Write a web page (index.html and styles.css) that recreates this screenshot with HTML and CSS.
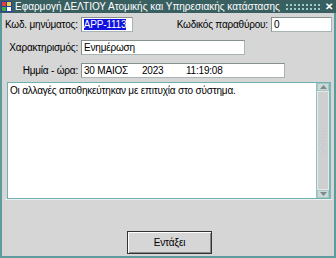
FILE: index.html
```html
<!DOCTYPE html>
<html lang="el">
<head>
<meta charset="utf-8">
<link rel="stylesheet" href="styles.css">
</head>
<body>
<div class="window">
  <div class="titlebar">
    <svg class="appicon" width="11" height="11" viewBox="0 0 11 11">
      <rect x="0" y="0" width="11" height="11" fill="#2a3fa0"/>
      <rect x="1" y="1" width="4" height="4" fill="#e04040"/>
      <rect x="6" y="1" width="4" height="4" fill="#f0d040"/>
      <rect x="1" y="6" width="4" height="4" fill="#40b040"/>
      <rect x="6" y="6" width="4" height="4" fill="#ffffff"/>
    </svg>
    <span class="title">Εφαρμογή ΔΕΛΤΙΟΥ Ατομικής και Υπηρεσιακής κατάστασης</span>
    <span class="grip"></span>
    <span class="close">✕</span>
  </div>
  <div class="content">
    <div class="row row1">
      <span class="label">Κωδ. μηνύματος:</span>
      <span class="field f-code"><span class="sel">APP-1113</span></span>
      <span class="label label2">Κωδικός παραθύρου:</span>
      <span class="field f-win">0</span>
    </div>
    <div class="row row2">
      <span class="label">Χαρακτηρισμός:</span>
      <span class="field f-type">Ενημέρωση</span>
    </div>
    <div class="row row3">
      <span class="label">Ημμία - ώρα:</span>
      <span class="field f-date"><span class="d-day">30 ΜΑΙΟΣ</span><span class="d-year">2023</span><span>11:19:08</span></span>
    </div>
    <div class="message">
      <div class="msgtext">Οι αλλαγές αποθηκεύτηκαν με επιτυχία στο σύστημα.</div>
      <div class="scrollbar">
        <div class="sb-btn"><svg width="7" height="4" viewBox="0 0 7 4"><path d="M0 4 L3.5 0 L7 4 Z" fill="#7a8a8a"/></svg></div>
        <div class="sb-track">
          <svg class="sb-dots" width="8" height="26" viewBox="0 0 8 26">
            <g fill="#ffffff" stroke="#9ab" stroke-width="0.5">
              <circle cx="5" cy="2" r="1"/><circle cx="2" cy="5" r="1"/><circle cx="5" cy="8" r="1"/>
              <circle cx="2" cy="11" r="1"/><circle cx="5" cy="14" r="1"/><circle cx="2" cy="17" r="1"/>
              <circle cx="5" cy="20" r="1"/><circle cx="2" cy="23" r="1"/><circle cx="5" cy="25" r="1"/>
            </g>
          </svg>
        </div>
        <div class="sb-btn"><svg width="7" height="4" viewBox="0 0 7 4"><path d="M0 0 L3.5 4 L7 0 Z" fill="#7a8a8a"/></svg></div>
      </div>
    </div>
    <div class="actions">
      <button class="ok">Εντάξει</button>
    </div>
  </div>
</div>
</body>
</html>
```
FILE: styles.css
```css
* { box-sizing: border-box; }
html, body { margin: 0; padding: 0; }
body {
  width: 336px;
  height: 258px;
  font-family: "Liberation Sans", Arial, sans-serif;
  font-size: 10px;
  letter-spacing: -0.2px;
  color: #000;
  background: #d6d6d6;
}
.window {
  width: 336px;
  height: 258px;
  display: flex;
  flex-direction: column;
  background: #d6d6d6;
  border-left: 2px solid #5e9c9c;
  border-right: 2px solid #5e9c9c;
  border-bottom: 2px solid #5e9c9c;
}
.titlebar {
  height: 13px;
  margin: 0 -2px;
  background: #3a5f61;
  color: #fff;
  display: flex;
  align-items: center;
  padding: 0 3px 0 1px;
}
.appicon { flex: none; }
.title {
  margin-left: 3px;
  font-size: 10px;
  letter-spacing: 0px;
  white-space: nowrap;
  flex: none;
}
.grip {
  flex: 1;
  height: 8px;
  margin: 0 5px 0 5px;
  background-image: radial-gradient(circle, #9cc 0.8px, transparent 1.2px);
  background-size: 4px 4px;
  background-position: 0 0;
}
.close {
  flex: none;
  font-size: 10px;
  font-weight: bold;
}
.content {
  flex: 1;
  display: flex;
  flex-direction: column;
  padding: 4px 2px 0 3px;
}
.row {
  display: flex;
  align-items: center;
  height: 15px;
}
.row2 { margin-top: 8px; }
.row3 { margin-top: 8px; }
.label {
  width: 74px;
  text-align: right;
  padding-right: 1px;
  white-space: nowrap;
}
.label2 { width: 172px; }
.field {
  margin-left: 2px;
  height: 15px;
  background: #fff;
  border: 1px solid #a9b4b4;
  border-top-color: #86908f;
  border-left-color: #86908f;
  padding: 0 2px;
  line-height: 13px;
  white-space: nowrap;
}
.f-code { width: 65px; padding-left: 2px; }
.sel { background: #1010e0; color: #fff; }
.f-win { width: 76px; }
.f-type { width: 164px; }
.f-date { width: 204px; }
.d-day { display: inline-block; width: 58px; }
.d-year { display: inline-block; width: 44px; }
.message {
  margin-top: 4px;
  margin-left: 2px;
  margin-right: 1px;
  height: 117px;
  background: #fff;
  border: 1px solid #6fb0b0;
  border-right: 2px solid #7ab8b8;
  display: flex;
}
.msgtext {
  flex: 1;
  padding: 2px 0 0 2px;
}
.scrollbar {
  width: 13px;
  display: flex;
  flex-direction: column;
  background: #d0d0d0;
  border-left: 1px solid #8cc4c4;
}
.sb-btn {
  height: 8px;
  display: flex;
  align-items: center;
  justify-content: center;
  background: #cfd8d8;
  border: 1px solid #a8c8c8;
}
.sb-track {
  flex: 1;
  background: #cfcfcf;
  border: 1px solid #e8e8e8;
  display: flex;
  align-items: center;
  justify-content: center;
}
.actions {
  flex: 1;
  display: flex;
  justify-content: center;
  align-items: flex-start;
  padding-top: 31px;
  padding-left: 2px;
  border-top: 1px solid #f0f0f0;
}
.ok {
  width: 85px;
  height: 23px;
  font-family: "Liberation Sans", Arial, sans-serif;
  font-size: 10px;
  letter-spacing: -0.1px;
  background: #d6d6d6;
  border: 1px solid #333;
  box-shadow: inset 1px 1px 0 #fff, inset -1px -1px 0 #888;
  padding: 0;
  color: #000;
}
```
